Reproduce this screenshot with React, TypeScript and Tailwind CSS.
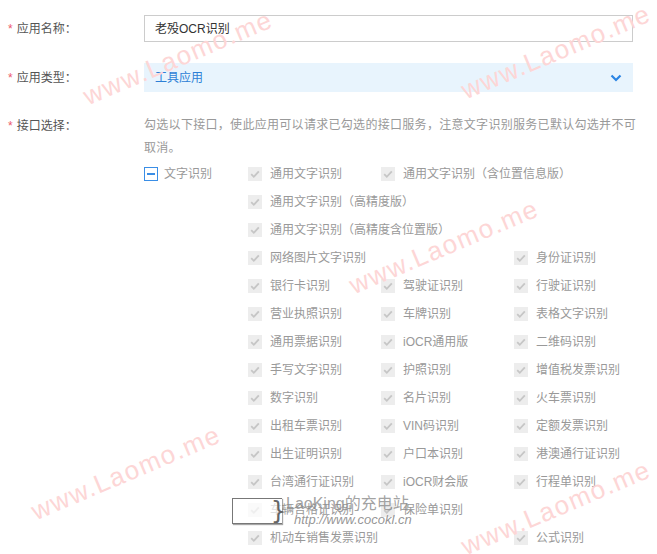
type Api = { name: string; wide?: boolean };

// Sub-interfaces under 文字识别, in the order they wrap on the page
const apis: Api[] = [
  { name: "通用文字识别" },
  { name: "通用文字识别（含位置信息版）", wide: true },
  { name: "通用文字识别（高精度版）", wide: true },
  { name: "通用文字识别（高精度含位置版）", wide: true },
  { name: "网络图片文字识别", wide: true },
  { name: "身份证识别" },
  { name: "银行卡识别" },
  { name: "驾驶证识别" },
  { name: "行驶证识别" },
  { name: "营业执照识别" },
  { name: "车牌识别" },
  { name: "表格文字识别" },
  { name: "通用票据识别" },
  { name: "iOCR通用版" },
  { name: "二维码识别" },
  { name: "手写文字识别" },
  { name: "护照识别" },
  { name: "增值税发票识别" },
  { name: "数字识别" },
  { name: "名片识别" },
  { name: "火车票识别" },
  { name: "出租车票识别" },
  { name: "VIN码识别" },
  { name: "定额发票识别" },
  { name: "出生证明识别" },
  { name: "户口本识别" },
  { name: "港澳通行证识别" },
  { name: "台湾通行证识别" },
  { name: "iOCR财会版" },
  { name: "行程单识别" },
  { name: "车辆合格证识别" },
  { name: "保险单识别" },
  { name: "机动车销售发票识别", wide: true },
  { name: "公式识别" },
];

function Label({ text, className = "" }: { text: string; className?: string }) {
  return (
    <div className={`w-[144px] shrink-0 flex items-center pl-[8px] text-[#555] ${className}`}>
      <span className="text-[#ec5a6e] mr-[4px]">*</span>
      {text}
    </div>
  );
}

/** Disabled, checked checkbox */
function CheckedBox() {
  return (
    <span className="w-[14px] h-[14px] shrink-0 bg-[#ededed] flex items-center justify-center">
      <svg width="12" height="12" viewBox="0 0 12 12" fill="none">
        <path d="M2.2 6.2l2.6 2.6 5-5.4" stroke="#c6c6c6" strokeWidth="1.8" />
      </svg>
    </span>
  );
}

function Watermark({ className }: { className: string }) {
  return (
    <div
      className={`absolute -translate-x-1/2 -translate-y-1/2 -rotate-[23deg] whitespace-nowrap text-[26px] tracking-[1.5px] text-[#fdd6d6] font-['Liberation_Sans',sans-serif] pointer-events-none ${className}`}
    >
      www.Laomo.me
    </div>
  );
}

export default function App() {
  return (
    <div className="relative w-[657px] h-[554px] overflow-hidden bg-white text-[12px] font-['Liberation_Sans','Noto_Sans_CJK_SC',sans-serif]">
      <div className="pt-[15px]">
        {/* 应用名称 */}
        <div className="flex h-[27px]">
          <Label text="应用名称：" />
          <div className="w-[489px] h-[27px] border border-[#cccccc] px-[10px] flex items-center text-[#333]">
            老殁OCR识别
          </div>
        </div>

        {/* 应用类型 */}
        <div className="flex h-[29px] mt-[21px]">
          <Label text="应用类型：" />
          <div className="w-[489px] h-[29px] bg-[#e8f4fd] pl-[11px] pr-[11px] flex items-center justify-between text-[#2d7fd6]">
            <span>工具应用</span>
            <svg width="12" height="8" viewBox="0 0 12 8" fill="none">
              <path d="M1.5 1.5l4.5 4.5 4.5-4.5" stroke="#2b85e4" strokeWidth="2.2" />
            </svg>
          </div>
        </div>

        {/* 接口选择 */}
        <div className="flex mt-[22px]">
          <Label text="接口选择：" className="h-[23px] self-start" />
          <div className="w-[489px]">
            <p className="w-[498px] leading-[23px] text-[#999] tracking-[0.3px]">
              勾选以下接口，使此应用可以请求已勾选的接口服务，注意文字识别服务已默认勾选并不可取消。
            </p>
            <div className="flex">
              <div className="w-[104px] h-[28px] shrink-0 flex items-center gap-[6px] text-[#999]">
                <span className="w-[14px] h-[14px] border border-[#3a8ee6] flex items-center justify-center">
                  <span className="w-[8px] h-[2px] bg-[#3a8ee6]" />
                </span>
                文字识别
              </div>
              <div className="grid grid-cols-[repeat(3,133px)] auto-rows-[28px]">
                {apis.map((api) => (
                  <div
                    key={api.name}
                    className={`flex items-center gap-[8px] text-[#999] whitespace-nowrap ${
                      api.wide ? "col-span-2" : ""
                    }`}
                  >
                    <CheckedBox />
                    {api.name}
                  </div>
                ))}
              </div>
            </div>
          </div>
        </div>
      </div>

      {/* Watermarks */}
      <Watermark className="left-[178px] top-[58px]" />
      <Watermark className="left-[556px] top-[52px]" />
      <Watermark className="left-[444px] top-[247px]" />
      <Watermark className="left-[126px] top-[473px]" />
      <Watermark className="left-[556px] top-[508px]" />

      {/* LaoKing stamp */}
      <div className="absolute left-[232px] top-[495px] flex items-start pointer-events-none">
        <div className="relative w-[50px] h-[26px] mt-[3px] bg-white/70 border border-[#777] border-r-0 shadow-[1px_1px_1px_rgba(0,0,0,0.35)]">
          <span className="absolute -right-[4px] top-0 text-[24px] leading-[24px] text-[#666] font-['DejaVu_Sans',sans-serif]">
            {"}"}
          </span>
        </div>
        <div className="ml-[4px] flex flex-col items-start">
          <span className="text-[16px] leading-[18px] text-[#8a8a8a]/80 font-['Liberation_Sans','Noto_Sans_CJK_SC',sans-serif]">
            LaoKing的充电站
          </span>
          <span className="ml-[8px] text-[13px] leading-[14px] italic text-[#8a8a8a]/90 font-['Liberation_Sans',sans-serif]">
            http://www.cocokl.cn
          </span>
        </div>
      </div>
    </div>
  );
}
